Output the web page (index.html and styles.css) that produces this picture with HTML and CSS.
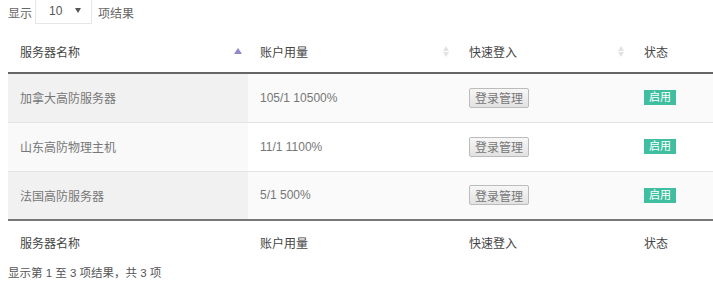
FILE: index.html
```html
<!DOCTYPE html>
<html>
<head>
<meta charset="utf-8">
<link rel="stylesheet" href="styles.css">
</head>
<body>
<div class="wrap">
  <div class="length">
    <span>显示</span>
    <span class="select"><span class="val">10</span><span class="caret"></span></span>
    <span class="after">项结果</span>
  </div>
  <table class="tbl">
    <colgroup>
      <col class="c1"><col class="c2"><col class="c3"><col class="c4">
    </colgroup>
    <thead>
      <tr>
        <th class="first"><div class="th-in"><span>服务器名称</span><span class="sort asc"><i class="up"></i></span></div></th>
        <th><div class="th-in"><span>账户用量</span><span class="sort both"><i class="up"></i><i class="down"></i></span></div></th>
        <th><div class="th-in"><span>快速登入</span><span class="sort both"><i class="up"></i><i class="down"></i></span></div></th>
        <th><div class="th-in"><span>状态</span></div></th>
      </tr>
    </thead>
    <tbody>
      <tr class="odd">
        <td class="sorted">加拿大高防服务器</td>
        <td>105/1 10500%</td>
        <td><button class="btn">登录管理</button></td>
        <td><span class="badge">启用</span></td>
      </tr>
      <tr class="even">
        <td class="sorted">山东高防物理主机</td>
        <td>11/1 1100%</td>
        <td><button class="btn">登录管理</button></td>
        <td><span class="badge">启用</span></td>
      </tr>
      <tr class="odd">
        <td class="sorted">法国高防服务器</td>
        <td>5/1 500%</td>
        <td><button class="btn">登录管理</button></td>
        <td><span class="badge">启用</span></td>
      </tr>
    </tbody>
    <tfoot>
      <tr>
        <th>服务器名称</th>
        <th>账户用量</th>
        <th>快速登入</th>
        <th>状态</th>
      </tr>
    </tfoot>
  </table>
  <div class="info">显示第 1 至 3 项结果，共 3 项</div>
</div>
</body>
</html>
```

FILE: styles.css
```css
html, body {
  margin: 0;
  padding: 0;
  background: #fff;
}
body {
  font-family: "Liberation Sans", "Noto Sans CJK SC", sans-serif;
  font-size: 12px;
  color: #666;
}
.wrap {
  padding-left: 8px;
}
.length {
  display: flex;
  align-items: center;
  height: 24px;
  color: #666;
}
.select {
  display: inline-flex;
  align-items: center;
  justify-content: space-between;
  box-sizing: border-box;
  width: 57px;
  height: 25px;
  margin: -2px 0 0 3px;
  padding: 0 10px 0 13px;
  border: 1px solid #e6e6e6;
  border-top: none;
  color: #555;
}
.caret {
  width: 0;
  height: 0;
  border-left: 3px solid transparent;
  border-right: 3px solid transparent;
  border-top: 5px solid #555;
}
.after {
  margin-left: 6px;
}
.tbl {
  width: 705px;
  border-collapse: collapse;
  table-layout: fixed;
  margin-top: 6px;
}
.c1 { width: 240px; }
.c2 { width: 209px; }
.c3 { width: 175px; }
.c4 { width: 81px; }
thead th {
  height: 43px;
  padding: 0 8px 0 12px;
  border-bottom: 2px solid #666;
  text-align: left;
  font-weight: normal;
  color: #444;
  box-sizing: border-box;
}
thead th.first {
  padding-right: 6px;
}
.th-in {
  display: flex;
  justify-content: space-between;
  align-items: center;
}
.sort {
  display: flex;
  flex-direction: column;
  gap: 1px;
}
.sort i {
  display: block;
  width: 0;
  height: 0;
  border-left: 3px solid transparent;
  border-right: 3px solid transparent;
}
.sort i.up {
  border-bottom: 5px solid #e2e2e2;
}
.sort i.down {
  border-top: 5px solid #e2e2e2;
}
.sort.asc i.up {
  border-left-width: 4px;
  border-right-width: 4px;
  border-bottom: 6px solid #9088c9;
}
tbody td {
  height: 49px;
  padding: 0 10px 0 12px;
  box-sizing: border-box;
  color: #777;
  border-top: 1px solid #e4e4e4;
  background: #fafafa;
}
tbody tr:first-child td {
  border-top: none;
}
tbody tr.even td {
  background: #fff;
}
tbody tr.odd td.sorted {
  background: #f1f1f1;
}
tbody tr.even td.sorted {
  background: #f9f9f9;
}
tbody tr:last-child td {
  border-bottom: 2px solid #777;
}
.btn {
  font-family: inherit;
  font-size: 12px;
  color: #777;
  padding: 0 5px;
  height: 20px;
  border: 1px solid #bcbcbc;
  border-radius: 2px;
  background: linear-gradient(#f7f7f7, #e2e2e2);
}
.badge {
  display: inline-block;
  background: #3fbfa0;
  color: #fff;
  font-size: 11px;
  padding: 0 5px;
  line-height: 15px;
}
tfoot th {
  height: 42px;
  padding: 0 10px 0 12px;
  text-align: left;
  font-weight: normal;
  color: #444;
}
.info {
  margin-top: 1px;
  height: 18px;
  line-height: 18px;
  font-size: 11.5px;
  color: #555;
}
```
